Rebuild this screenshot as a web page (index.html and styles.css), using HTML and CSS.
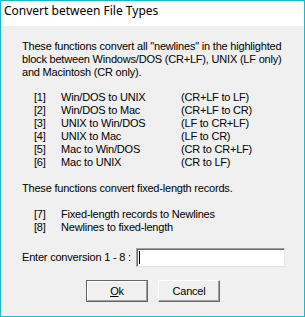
FILE: index.html
```html
<!DOCTYPE html>
<html>
<head>
<meta charset="utf-8">
<link rel="stylesheet" href="styles.css">
</head>
<body>
<div class="window">
  <div class="titlebar">Convert between File Types</div>
  <div class="content">
    <p class="para">These functions convert all "newlines" in the highlighted<br>block between Windows/DOS (CR+LF), UNIX (LF only)<br>and Macintosh (CR only).</p>
    <div class="list list-a">
      <span>[1]</span><span>Win/DOS to UNIX</span><span>(CR+LF to LF)</span>
      <span>[2]</span><span>Win/DOS to Mac</span><span>(CR+LF to CR)</span>
      <span>[3]</span><span>UNIX to Win/DOS</span><span>(LF to CR+LF)</span>
      <span>[4]</span><span>UNIX to Mac</span><span>(LF to CR)</span>
      <span>[5]</span><span>Mac to Win/DOS</span><span>(CR to CR+LF)</span>
      <span>[6]</span><span>Mac to UNIX</span><span>(CR to LF)</span>
    </div>
    <p class="para para-fixed">These functions convert fixed-length records.</p>
    <div class="list list-b">
      <span>[7]</span><span>Fixed-length records to Newlines</span>
      <span>[8]</span><span>Newlines to fixed-length</span>
    </div>
    <div class="entry">
      <label class="entry-label">Enter conversion 1 - 8 :</label>
      <div class="textbox"><span class="caret"></span></div>
    </div>
    <div class="buttons">
      <div class="btn btn-default"><span class="btn-inner"><u>O</u>k</span></div>
      <div class="btn"><span class="btn-inner">Cancel</span></div>
    </div>
  </div>
</div>
</body>
</html>
```
FILE: styles.css
```css
html, body {
  margin: 0;
  padding: 0;
}
body {
  width: 305px;
  height: 317px;
  overflow: hidden;
  background: #f0f0f0;
}
.window {
  box-sizing: border-box;
  width: 305px;
  height: 317px;
  border: 1px solid #18b9c9;
  background: #f0f0f0;
  display: flex;
  flex-direction: column;
}
.titlebar {
  height: 25px;
  background: #ffffff;
  font-family: "Noto Sans", sans-serif;
  font-size: 12px;
  line-height: 16px;
  padding: 2px 0 0 3px;
  box-sizing: border-box;
  color: #000;
}
.content {
  padding: 14px 0 0 21px;
  font-family: "Liberation Sans", Arial, sans-serif;
  font-size: 11px;
  letter-spacing: -0.2px;
  line-height: 13px;
  color: #000;
}
.para {
  margin: 0;
}
.list {
  display: grid;
  padding-left: 12px;
}
.list-a {
  grid-template-columns: 27px 120px auto;
  margin-top: 12px;
}
.list-b {
  grid-template-columns: 27px auto;
  margin-top: 13px;
}
.para-fixed {
  margin-top: 13px;
}
.entry {
  display: flex;
  align-items: center;
  margin-top: 14px;
  height: 19px;
}
.entry-label {
  width: 114px;
  white-space: nowrap;
}
.textbox {
  box-sizing: border-box;
  width: 149px;
  height: 19px;
  background: #fff;
  border-top: 1px solid #a0a0a0;
  border-left: 1px solid #a0a0a0;
  border-right: 1px solid #e3e3e3;
  border-bottom: 1px solid #e3e3e3;
  box-shadow: inset 1px 1px 0 #696969;
  display: flex;
  align-items: center;
  padding-left: 2px;
}
.caret {
  width: 1px;
  height: 13px;
  background: #000;
}
.buttons {
  display: flex;
  gap: 10px;
  margin-top: 13px;
  padding-left: 64px;
}
.btn {
  box-sizing: border-box;
  width: 62px;
  height: 22px;
  background: #f0f0f0;
  border-top: 1px solid #ffffff;
  border-left: 1px solid #ffffff;
  border-right: 1px solid #696969;
  border-bottom: 1px solid #696969;
  box-shadow: inset -1px -1px 0 #a0a0a0;
  display: flex;
}
.btn-inner {
  flex: 1;
  display: flex;
  align-items: center;
  justify-content: center;
}
.btn-default {
  border: 1px solid #646464;
  box-shadow: none;
}
.btn-default .btn-inner {
  border-top: 1px solid #ffffff;
  border-left: 1px solid #ffffff;
  border-right: 1px solid #a0a0a0;
  border-bottom: 1px solid #a0a0a0;
}
```
